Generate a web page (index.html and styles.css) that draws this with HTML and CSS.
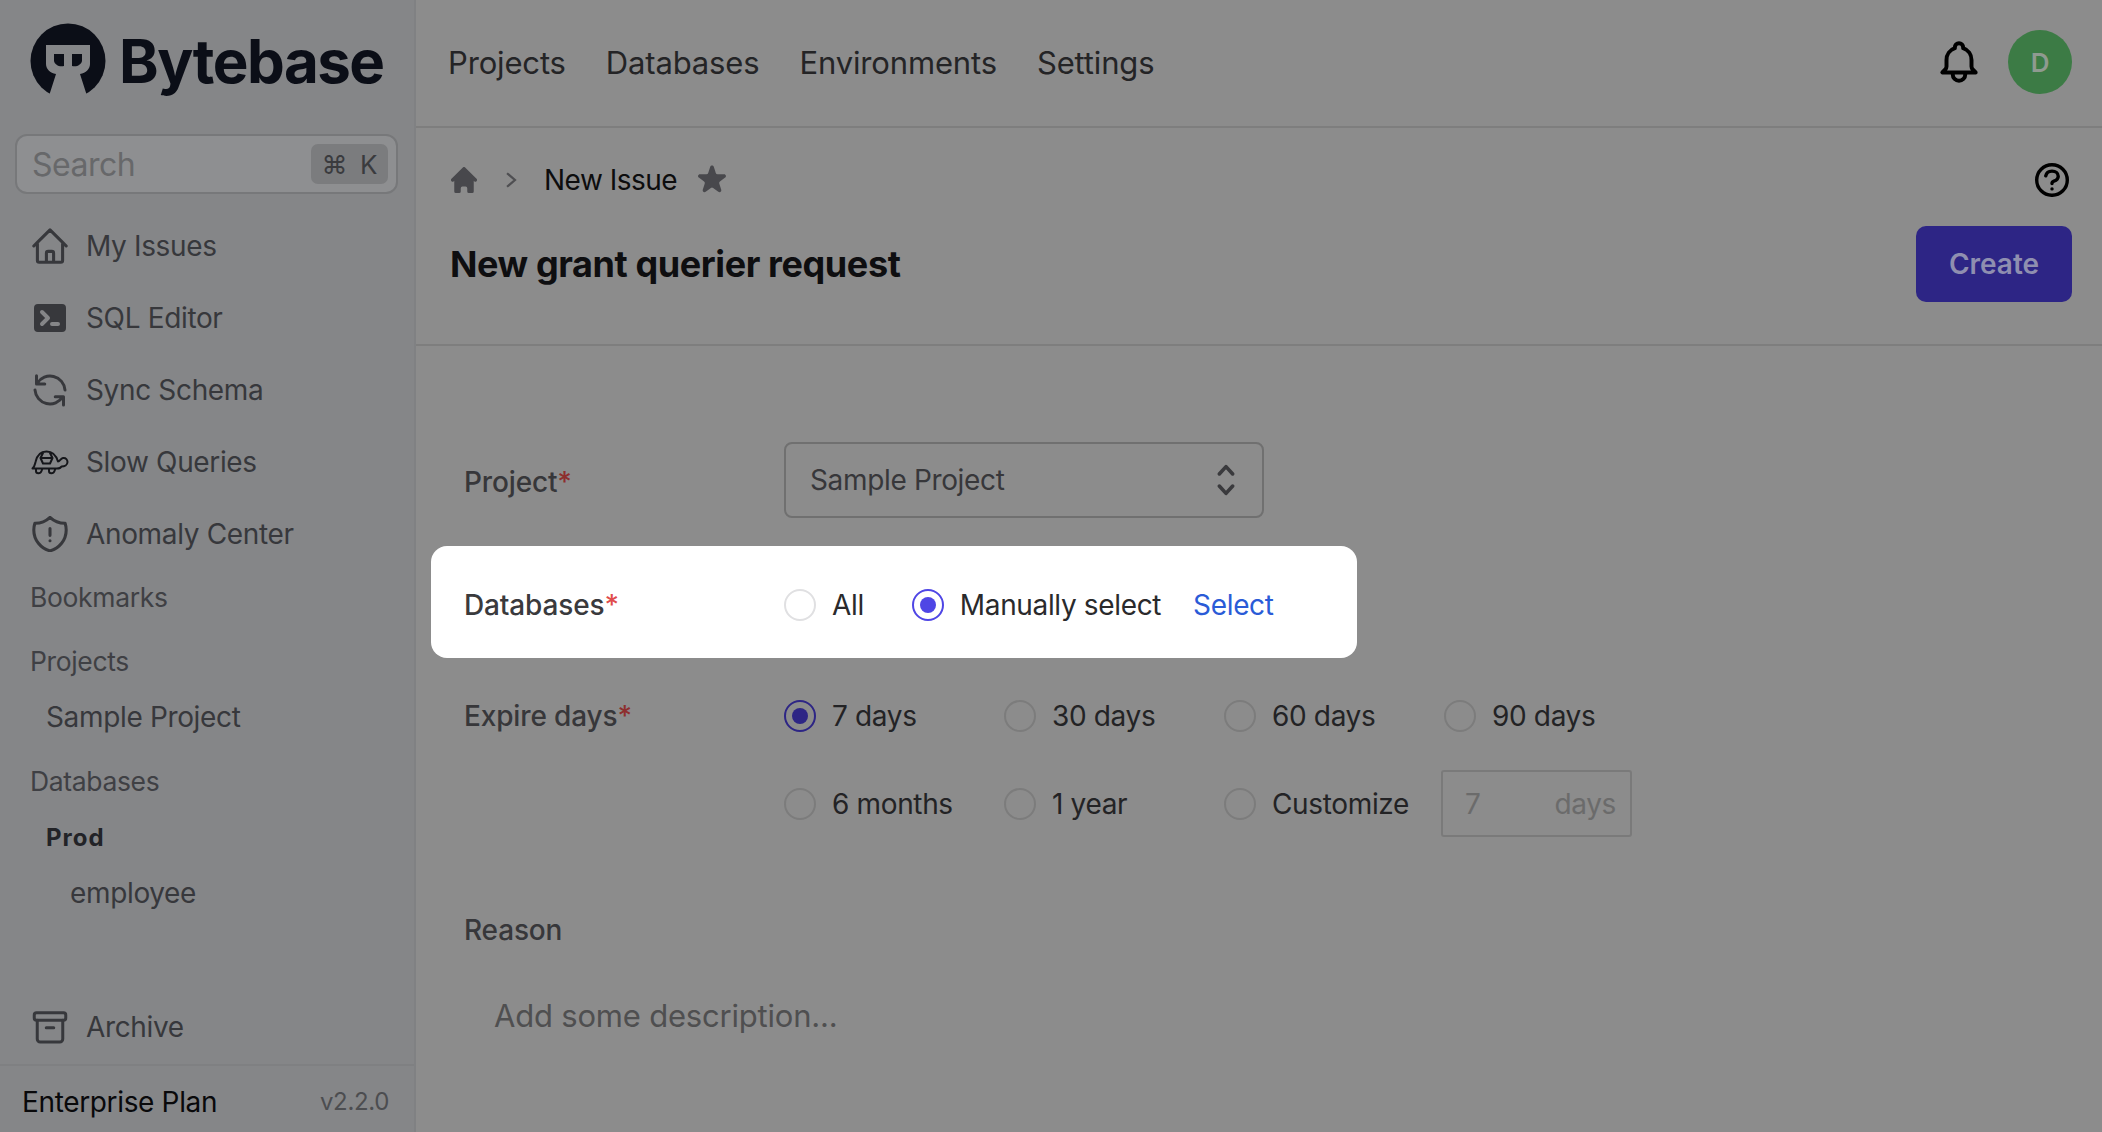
FILE: index.html
```html
<!DOCTYPE html>
<html lang="en">
<head>
    <meta charset="UTF-8" />
    <title>New Issue - Bytebase</title>
    <link rel="stylesheet" href="styles.css">
</head>
<body>
    <aside class="sidebar">
        <div class="logo">
            <svg class="logo-mark" viewBox="0 0 76 76">
                <circle cx="38" cy="38" r="37.5" fill="#0b0e17"/>
                <path d="M16 22h44v19c0 5-4 9-10 10l8 25H18l8-25c-6-1-10-5-10-10z" fill="#858688"/>
                <path d="M24 31h10v12c-5 1-9-1-10-5zM42 31h10v7c-1 4-5 6-10 5z" fill="#0b0e17"/>
            </svg>
            <span class="logo-text">Bytebase</span>
        </div>
        <div class="search">
            <span>Search</span>
            <kbd class="search-key"><span>⌘</span><span>K</span></kbd>
        </div>
        <nav class="side-nav">
            <a class="side-item">
                <svg class="side-icon" viewBox="2 2 20 20" fill="none" stroke="currentColor" stroke-width="1.700" stroke-linecap="round" stroke-linejoin="round"><path d="M3 12l2-2m0 0l7-7 7 7M5 10v10a1 1 0 001 1h3m10-11l2 2m-2-2v10a1 1 0 01-1 1h-3m-6 0a1 1 0 001-1v-4a1 1 0 011-1h2a1 1 0 011 1v4a1 1 0 001 1m-6 0h6"/></svg>
                My Issues
            </a>
            <a class="side-item">
                <svg class="side-icon sql" viewBox="2 3 16 14" fill="currentColor"><path fill-rule="evenodd" clip-rule="evenodd" d="M2 5a2 2 0 012-2h12a2 2 0 012 2v10a2 2 0 01-2 2H4a2 2 0 01-2-2V5zm3.293 1.293a1 1 0 011.414 0l3 3a1 1 0 010 1.414l-3 3a1 1 0 01-1.414-1.414L7.586 10 5.293 7.707a1 1 0 010-1.414zM11 12a1 1 0 100 2h3a1 1 0 100-2h-3z"/></svg>
                SQL Editor
            </a>
            <a class="side-item">
                <svg class="side-icon" viewBox="0 0 24 24" fill="none" stroke="currentColor" stroke-width="2" stroke-linecap="round" stroke-linejoin="round"><path d="M3 2.500V8h5.500M3.500 7.500A10 10 0 0 1 22 12M2 12A10 10 0 0 0 20.500 16.500M21 22v-5.500h-5.500"/></svg>
                Sync Schema
            </a>
            <a class="side-item">
                <svg class="side-icon turtle" viewBox="0 0 38 25" fill="none" stroke="#15161a" stroke-width="2" stroke-linecap="round" stroke-linejoin="round"><path d="M1.500 18.500C4 16 4 14 4.500 12 6 5 10 1.500 15.500 1.500 21 1.500 25 5 27 11.500c2 0 2.500-3 5-3.500 3-.5 4.500 2 4.500 4 0 3-3 4.500-6 4.500-1 2-2 2-4.500 2zM12 3L9.500 8l2.500 5.500h7L21.500 8 19 3M9.500 8h12M5 18.500V21c0 3 4.500 3 5.500 0l1-2.500M18 18.500V21c0 3 4.500 3 5.500 0l1-2.500"/></svg>
                Slow Queries
            </a>
            <a class="side-item">
                <svg class="side-icon" viewBox="2 2 20 20" fill="none" stroke="currentColor" stroke-width="1.700" stroke-linecap="round" stroke-linejoin="round"><path d="M12 9v3.750m0-10.036A11.959 11.959 0 013.598 6 11.990 11.990 0 003 9.750c0 5.592 3.824 10.290 9 11.622 5.176-1.332 9-6.030 9-11.622 0-1.310-.210-2.571-.598-3.751h-.152c-3.196 0-6.100-1.249-8.250-3.286zm0 13.036h.008v.008H12v-.008z"/></svg>
                Anomaly Center
            </a>
        </nav>
        <div class="side-group first">Bookmarks</div>
        <div class="side-group">Projects</div>
        <div class="side-link">Sample Project</div>
        <div class="side-group">Databases</div>
        <div class="side-link env">Prod</div>
        <div class="side-link nested">employee</div>
        <a class="side-item archive">
            <svg class="side-icon" viewBox="0 0 24 24" fill="none" stroke="currentColor" stroke-width="2" stroke-linecap="round" stroke-linejoin="round"><rect x="1.500" y="2.500" width="21" height="5" rx="1.500"/><path d="M3.500 7.500V20a2 2 0 002 2h13a2 2 0 002-2V7.500M9.500 12.500h5"/></svg>
            Archive
        </a>
        <div class="plan">
            <span class="plan-name">Enterprise Plan</span>
            <span class="plan-version">v2.2.0</span>
        </div>
    </aside>

    <div class="content">
        <header class="topbar">
            <nav class="top-nav">
                <a>Projects</a>
                <a>Databases</a>
                <a>Environments</a>
                <a>Settings</a>
            </nav>
            <div class="top-actions">
                <svg class="bell" viewBox="0 0 24 24" fill="none" stroke="#000" stroke-width="1.900" stroke-linecap="round" stroke-linejoin="round"><path d="M15 17h5l-1.405-1.405A2.032 2.032 0 0118 14.158V11a6.002 6.002 0 00-4-5.659V5a2 2 0 10-4 0v.341C7.670 6.165 6 8.388 6 11v3.159c0 .538-.214 1.055-.595 1.436L4 17h5m6 0v1a3 3 0 11-6 0v-1m6 0H9"/></svg>
                <div class="avatar">D</div>
            </div>
        </header>

        <section class="page-head">
            <div class="crumbs">
                <svg class="crumb-home" viewBox="2 2 16 16" fill="#48484c"><path d="M10.707 2.293a1 1 0 00-1.414 0l-7 7a1 1 0 001.414 1.414L4 10.414V17a1 1 0 001 1h2a1 1 0 001-1v-2a1 1 0 011-1h2a1 1 0 011 1v2a1 1 0 001 1h2a1 1 0 001-1v-6.586l.293.293a1 1 0 001.414-1.414l-7-7z"/></svg>
                <svg class="crumb-sep" viewBox="0 0 12 16" fill="none" stroke="#4f4f52" stroke-width="2"><path d="M2.500 2l7 6-7 6"/></svg>
                <span class="crumb-text">New Issue</span>
                <svg class="crumb-star" viewBox="2 2 16 16" fill="#48484c"><path d="M9.049 2.927c.3-.921 1.603-.921 1.902 0l1.070 3.292a1 1 0 00.950.690h3.462c.969 0 1.371 1.240.588 1.810l-2.800 2.034a1 1 0 00-.364 1.118l1.070 3.292c.3.921-.755 1.688-1.540 1.118l-2.800-2.034a1 1 0 00-1.175 0l-2.800 2.034c-.784.570-1.838-.197-1.539-1.118l1.070-3.292a1 1 0 00-.364-1.118L2.980 8.720c-.783-.570-.380-1.810.588-1.810h3.461a1 1 0 00.951-.690l1.070-3.292z"/></svg>
                <svg class="crumb-help" viewBox="3 3 18 18" fill="none" stroke="#000" stroke-width="1.800" stroke-linecap="round" stroke-linejoin="round"><path d="M8.700 9.800C9 8.300 10.300 7.300 12 7.300c1.900 0 3.300 1.200 3.300 2.700 0 1.300-1 2.200-2.300 2.600-.6.200-1 .7-1 1.300m0 2.800h.010M20.100 12a8.100 8.100 0 11-16.200 0 8.100 8.100 0 0116.200 0z"/></svg>
            </div>
            <div class="title-row">
                <h1>New grant querier request</h1>
                <button class="create-btn">Create</button>
            </div>
        </section>

        <form class="grant-form">
            <div class="form-row project-row">
                <label class="form-label">Project<em>*</em></label>
                <div class="select-box">
                    <span>Sample Project</span>
                    <svg class="select-arrows" viewBox="0 0 16 28" fill="none" stroke="#3a3a3d" stroke-width="3" stroke-linecap="round" stroke-linejoin="round"><path d="M2.500 9L8 3l5.500 6M2.500 19L8 25l5.500-6"/></svg>
                </div>
            </div>

            <div class="form-row spotlight">
                <label class="form-label">Databases<em>*</em></label>
                <div class="radio-line">
                    <span class="radio"></span><span class="radio-text">All</span>
                    <span class="radio on manual"></span><span class="radio-text">Manually select</span>
                    <a class="select-link">Select</a>
                </div>
            </div>

            <div class="form-row expire-row">
                <label class="form-label">Expire days<em>*</em></label>
                <div class="expire-grid">
                    <div class="opt"><span class="radio on dim"></span><span class="radio-text">7 days</span></div>
                    <div class="opt"><span class="radio dim"></span><span class="radio-text">30 days</span></div>
                    <div class="opt"><span class="radio dim"></span><span class="radio-text">60 days</span></div>
                    <div class="opt"><span class="radio dim"></span><span class="radio-text">90 days</span></div>
                    <div class="opt"><span class="radio dim"></span><span class="radio-text">6 months</span></div>
                    <div class="opt"><span class="radio dim"></span><span class="radio-text">1 year</span></div>
                    <div class="opt"><span class="radio dim"></span><span class="radio-text">Customize</span></div>
                    <div class="days-box"><span>7</span><span>days</span></div>
                </div>
            </div>

            <div class="reason">
                <label class="form-label">Reason</label>
                <div class="reason-text">Add some description...</div>
            </div>
        </form>
    </div>
</body>
</html>
```

FILE: styles.css
```css
* { box-sizing: border-box; }
html, body { height: 100%; }
body {
    margin: 0;
    display: flex;
    height: 1132px;
    overflow: hidden;
    background-color: #8c8c8c;
    color: #38383b;
    font-family: Inter, "Liberation Sans", sans-serif;
    font-size: 28px;
    letter-spacing: -0.35px;
}

/* sidebar */
.sidebar {
    width: 416px;
    flex: none;
    display: flex;
    flex-direction: column;
    background-color: #858688;
    border-right: 2px solid #808183;
    color: #37383c;
}
.logo { display: flex; align-items: center; height: 134px; padding: 0 0 12px 30px; }
.logo-mark { width: 76px; height: 76px; flex: none; }
.logo-text { margin-left: 13px; font-size: 60px; font-weight: 700; letter-spacing: -1.5px; color: #0b0e17; }
.search {
    display: flex;
    align-items: center;
    justify-content: space-between;
    height: 60px;
    margin: 0 16px 0 15px;
    padding: 0 8px 0 15px;
    border: 2px solid #77787a;
    border-radius: 12px;
    background-color: #8e8f91;
    color: #67686a;
    font-size: 32px;
    letter-spacing: -0.5px;
}
.search-key {
    display: flex;
    align-items: center;
    gap: 13px;
    height: 40px;
    padding: 0 11px;
    border-radius: 7px;
    background-color: #7b7c7e;
    color: #3a3b3e;
    font-family: Inter, "DejaVu Sans", sans-serif;
    font-size: 26px;
}
.side-nav { display: flex; flex-direction: column; padding-top: 16px; }
.side-item { display: flex; align-items: center; height: 72px; padding-left: 32px; font-size: 28px; }
.side-icon { width: 36px; height: 36px; flex: none; margin-right: 18px; }
.side-icon.sql { width: 32px; height: 28px; margin: 0 20px 0 2px; }
.side-icon.turtle { width: 38px; height: 25px; margin: 0 17px 0 -1px; }
.side-group { display: flex; align-items: center; height: 40px; margin-top: 24px; padding-left: 30px; font-size: 26.5px; color: #3f4044; }
.side-group.first { margin-top: 7px; }
.side-link { display: flex; align-items: center; height: 40px; margin-top: 16px; padding-left: 46px; }
.side-link.env { font-size: 24px; font-weight: 700; letter-spacing: 1px; color: #222327; }
.side-link.nested { padding-left: 70px; }
.side-item.archive { margin-top: auto; height: 72px; padding-bottom: 2px; }
.plan {
    display: flex;
    align-items: center;
    justify-content: space-between;
    height: 68px;
    padding: 5px 25px 0 22px;
    border-top: 2px solid #7f8082;
}
.plan-name { color: #09090b; }
.plan-version { font-size: 24px; color: #4c4d50; }

/* top bar */
.content { flex: 1; min-width: 0; display: flex; flex-direction: column; }
.topbar {
    display: flex;
    align-items: center;
    justify-content: space-between;
    height: 128px;
    flex: none;
    padding: 0 30px 2px 32px;
    border-bottom: 2px solid #7e7e7e;
}
.top-nav { display: flex; gap: 40px; font-size: 31px; letter-spacing: -0.15px; color: #242426; }
.top-actions { display: flex; align-items: center; gap: 24px; }
.bell { width: 50px; height: 50px; }
.avatar {
    display: flex;
    align-items: center;
    justify-content: center;
    width: 64px;
    height: 64px;
    border-radius: 50%;
    background-color: #3c7b45;
    color: #8f9a90;
    font-size: 26px;
    font-weight: 600;
}

/* page head */
.page-head { height: 218px; flex: none; padding: 32px 30px 0 34px; border-bottom: 2px solid #7e7e7e; }
.crumbs { display: flex; align-items: center; height: 40px; }
.crumb-home { width: 26px; height: 26px; margin-left: 1px; }
.crumb-sep { width: 14px; height: 18px; margin-left: 27px; }
.crumb-text { margin-left: 26px; color: #0d0d0e; letter-spacing: -0.5px; }
.crumb-star { width: 30px; height: 30px; margin-left: 20px; }
.crumb-help { width: 34px; height: 34px; margin-left: auto; margin-right: 3px; }
.title-row { display: flex; align-items: center; justify-content: space-between; margin-top: 26px; }
h1 { margin: 0; font-size: 36px; font-weight: 700; letter-spacing: -0.4px; color: #0e0e10; }
.create-btn {
    width: 156px;
    height: 76px;
    border: 0;
    border-radius: 10px;
    background-color: #2d2585;
    color: #8f8fb0;
    font: 600 28px Inter, sans-serif;
}

/* form */
.grant-form { padding: 96px 0 0 15px; }
.form-row { display: flex; }
.form-label { width: 320px; flex: none; color: #37373a; font-weight: 500; letter-spacing: -0.15px; }
.form-label em { color: #8e2e2e; font-style: normal; }
.project-row { align-items: center; width: 926px; height: 76px; padding-left: 33px; }
.project-row .form-label { padding-top: 4px; }
.select-box {
    display: flex;
    align-items: center;
    justify-content: space-between;
    width: 480px;
    height: 76px;
    padding: 0 26px 0 24px;
    border: 2px solid #707070;
    border-radius: 8px;
    color: #37373a;
}
.select-arrows { width: 20px; height: 34px; }
.spotlight {
    align-items: center;
    width: 926px;
    height: 112px;
    margin-top: 28px;
    padding: 5px 0 0 33px;
    border-radius: 16px;
    background-color: #fff;
    color: #2a2a2c;
}
.spotlight .form-label { color: #3a3a3d; }
.spotlight .form-label em { color: #e04c4c; }
.radio-line { display: flex; align-items: center; }
.radio {
    position: relative;
    width: 32px;
    height: 32px;
    flex: none;
    border: 2px solid #e0e0e2;
    border-radius: 50%;
}
.radio.dim { border-color: #7c7c7c; }
.radio.on { border-color: #4f46e5; }
.radio.on::after {
    content: "";
    position: absolute;
    top: 6px;
    left: 6px;
    width: 16px;
    height: 16px;
    border-radius: 50%;
    background-color: #4f46e5;
}
.radio.on.dim { border-color: #2d2585; }
.radio.on.dim::after { background-color: #2d2585; }
.radio-text { margin-left: 16px; }
.radio.manual { margin-left: 48px; }
.select-link { margin-left: 32px; color: #2a5bd7; }
.expire-row { margin-top: 30px; padding-left: 33px; }
.expire-row .form-label { line-height: 56px; }
.expire-grid { display: grid; grid-template-columns: repeat(4, 220px); grid-auto-rows: 72px; }
.opt { display: flex; align-items: center; height: 56px; color: #232325; }
.expire-grid .opt:nth-child(n+5) { height: 67px; margin-top: 10px; }
.days-box {
    display: flex;
    align-items: center;
    justify-content: space-between;
    width: 191px;
    height: 67px;
    margin: 10px 0 0 -3px;
    padding: 0 14px 0 22px;
    border: 2px solid #7a7a7a;
    border-radius: 3px;
    color: #6b6b6b;
}
.reason { margin-top: 78px; padding-left: 33px; }
.reason .form-label { display: block; line-height: 40px; }
.reason-text { margin: 47px 0 0 30px; font-size: 31px; letter-spacing: -0.2px; color: #4f4f50; }
```
